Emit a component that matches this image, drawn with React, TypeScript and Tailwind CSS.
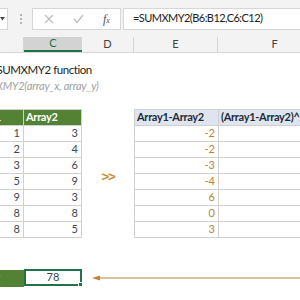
import { ReactNode } from 'react'

const LEFT = [
  [1, 3],
  [2, 4],
  [3, 6],
  [5, 9],
  [9, 3],
  [8, 8],
  [8, 5],
]
const DIFF = [-2, -2, -3, -4, 6, 0, 3]

function Cell({ w, className = '', children }: { w: string; className?: string; children?: ReactNode }) {
  return <div className={`${w} h-full shrink-0 flex items-center ${className}`}>{children}</div>
}

export default function App() {
  return (
    <div className="w-[300px] h-[300px] overflow-hidden bg-white" style={{ fontFamily: 'Lato, "Liberation Sans", sans-serif' }}>
      {/* Formula bar */}
      <div className="h-[37px] bg-[#f3f3f3] flex items-center">
        <div className="w-[8px] h-[22px] bg-white border border-l-0 border-[#d6d6d6] flex items-center">
          <svg width="5" height="4" viewBox="0 0 5 4">
            <path d="M0 0 H5 L2.5 3.5 Z" fill="#444" />
          </svg>
        </div>
        <div className="ml-[12px] flex flex-col gap-[2px]">
          <div className="w-[2px] h-[2px] bg-[#b5b5b5]" />
          <div className="w-[2px] h-[2px] bg-[#b5b5b5]" />
          <div className="w-[2px] h-[2px] bg-[#b5b5b5]" />
        </div>
        <div className="ml-[10px] w-[89px] h-[22px] bg-white border border-[#d6d6d6] flex items-center">
          <svg width="10" height="10" viewBox="0 0 10 10" className="ml-[11px]">
            <path d="M1 1 L9 9 M9 1 L1 9" stroke="#bdbdbd" strokeWidth="1.2" />
          </svg>
          <svg width="11" height="10" viewBox="0 0 11 10" className="ml-[19px]">
            <path d="M1 5 L4 8.5 L10 1" stroke="#bdbdbd" strokeWidth="1.3" fill="none" />
          </svg>
          <span className="ml-[19px] text-[12px] italic text-[#555]" style={{ fontFamily: '"Liberation Serif", serif' }}>
            f<span className="text-[8px]">x</span>
          </span>
        </div>
        <div className="ml-[2px] flex-1 h-[22px] bg-white border border-r-0 border-[#d6d6d6] flex items-center pl-[9px] text-[11px] tracking-[-0.55px] text-[#222] whitespace-nowrap overflow-hidden">
          =SUMXMY2(B6:B12,C6:C12)
        </div>
      </div>

      {/* Sheet, scrolled so column B is mostly hidden */}
      <div className="-ml-[34px] w-[400px]">
        {/* Column headers */}
        <div className="h-[16px] flex bg-[#f3f3f3] border-b border-[#d6d6d6] text-[11px] text-[#444]">
          <Cell w="w-[58px]" className="border-r border-[#d6d6d6]" />
          <Cell w="w-[58px]" className="justify-center bg-[#d3d3d3] text-[#217346] border-b-2 border-[#217346]">C</Cell>
          <Cell w="w-[52px]" className="justify-center border-r border-[#d6d6d6]">D</Cell>
          <Cell w="w-[84px]" className="justify-center border-r border-[#d6d6d6]">E</Cell>
          <Cell w="w-[114px]" className="justify-center border-r border-[#d6d6d6]">F</Cell>
        </div>

        <div className="h-[9px]" />
        <div className="h-[16px] pl-[4px] text-[11.5px] tracking-[-0.45px] leading-[16px] text-[#222] whitespace-nowrap">Excel SUMXMY2 function</div>
        <div className="h-[16px] pl-[2px] text-[11px] tracking-[-0.2px] leading-[16px] italic text-[#a0a0a0] whitespace-nowrap">=SUMXMY2(array_x, array_y)</div>
        <div className="h-[15px]" />

        {/* Tables */}
        <div className="flex text-[11px]">
          <div className="w-[116px] border-t border-[#d0d0d0]">
            <div className="h-[16px] flex bg-[#548235] text-white font-bold tracking-[-0.3px] border-b border-[#d0d0d0]">
              <Cell w="w-[58px]" className="justify-end pr-[22px] border-r border-[#d0d0d0]">Array1</Cell>
              <Cell w="w-[58px]" className="pl-[2px] border-r border-[#d0d0d0]">Array2</Cell>
            </div>
            {LEFT.map((r, i) => (
              <div key={i} className="h-[16px] flex text-[#3d4656] border-b border-[#d0d0d0]">
                <Cell w="w-[58px]" className="justify-end pr-[3px] border-r border-[#d0d0d0]">{r[0]}</Cell>
                <Cell w="w-[58px]" className="justify-end pr-[3px] border-r border-[#d0d0d0]">{r[1]}</Cell>
              </div>
            ))}
          </div>

          <div
            className="w-[52px] flex items-center justify-center pt-[6px] text-[13px] font-bold tracking-[-1px] text-[#c98a2f]"
            style={{ fontFamily: '"Liberation Sans", sans-serif' }}
          >
            &gt;&gt;
          </div>

          <div className="w-[198px] border-t border-l border-[#d0d0d0]">
            <div className="h-[16px] flex bg-[#dee5ef] text-[#1e2a38] font-bold tracking-[-0.3px] border-b border-[#d0d0d0] whitespace-nowrap">
              <Cell w="w-[84px]" className="pl-[2px] border-r border-[#d0d0d0]">Array1-Array2</Cell>
              <Cell w="w-[114px]" className="pl-[2px]">(Array1-Array2)^2</Cell>
            </div>
            {DIFF.map((d, i) => (
              <div key={i} className="h-[16px] flex text-[#b8862f] border-b border-[#d0d0d0]">
                <Cell w="w-[84px]" className="justify-end pr-[3px] border-r border-[#d0d0d0]">{d}</Cell>
                <Cell w="w-[114px]" />
              </div>
            ))}
          </div>
        </div>

        <div className="h-[31px]" />

        {/* Result row */}
        <div className="h-[17px] flex text-[11px]">
          <Cell w="w-[58px]" className="bg-[#548235] text-[#f2c75c] font-bold justify-end pr-[24px] my-[1px] h-[15px]">Result</Cell>
          <div className="relative w-[58px] h-full border-2 border-[#217346] flex items-center justify-center text-[#3d4656]">
            78
            <div className="absolute -right-[3px] -bottom-[3px] w-[5px] h-[5px] bg-[#217346] border border-white" />
          </div>
          <div className="flex-1 flex items-center pl-[10px]">
            <svg width="220" height="8" viewBox="0 0 220 8">
              <path d="M0 4 L8 1.5 L8 6.5 Z" fill="#c4812f" />
              <path d="M7 4 H220" stroke="#b8823f" strokeWidth="1" />
            </svg>
          </div>
        </div>
      </div>
    </div>
  )
}
